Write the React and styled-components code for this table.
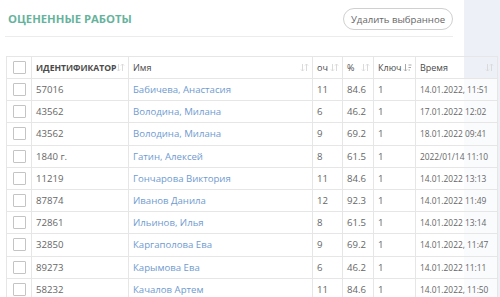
import React from 'react'
import styled, { createGlobalStyle } from 'styled-components'

const Global = createGlobalStyle`
	html, body { margin: 0; padding: 0; background: #fff; }
	body { font-family: "Open Sans", "Liberation Sans", sans-serif; width: 500px; height: 297px; overflow: hidden; }
`

const Page = styled.div`
	width: 500px; height: 297px; overflow: hidden; padding-left: 5px; box-sizing: border-box;
	background: linear-gradient(to right, #fff 464px, #edf1f7 464px);
`
const Head = styled.div`
	display: flex; align-items: center; justify-content: space-between;
	height: 36px; width: 448px; border-bottom: 1px solid #ececec;
`
const Title = styled.h2`
	margin: 0 0 0 3px; font-size: 11.3px; font-weight: 700; color: #66b39c;
`
const Button = styled.button`
	height: 22px; width: 110px; padding: 0; margin-top: 2px; border: 1px solid #d0d0d0; border-radius: 11px;
	background: #fff; color: #666; font-family: inherit; font-size: 9.6px;
`
const Table = styled.table`
	margin-top: 19px; margin-left: 1px; width: 492px; border-collapse: collapse; table-layout: fixed;
	border-top: 1px solid #e6e6e6; border-left: 1px solid #e6e6e6;
`
const Th = styled.th`
	height: 21px; padding: 0 3px 0 4px; text-align: left; font-size: ${ p => p.$bold ? '8.6px' : '9px' };
	font-weight: ${ p => p.$bold ? 700 : 400 }; color: #4a4a4a; border-right: 1px solid #e6e6e6;
	border-bottom: 1px solid #e6e6e6; white-space: nowrap; overflow: hidden;
`
const ThIn = styled.div`
	display: flex; align-items: center; justify-content: space-between;
`
const Tr = styled.tr`
	background: rgba(255,255,255,0.72);
`
const Td = styled.td`
	height: 21.2px; padding: 0 3px 0 4px; font-size: ${ p => p.$small ? '8.4px' : '9.6px' };
	color: ${ p => p.$link ? '#6f9bd0' : '#666' }; border-right: 1px solid #e6e6e6;
	border-bottom: 1px solid #e6e6e6; white-space: nowrap; overflow: hidden;
`
const Box = styled.span`
	display: block; width: 11px; height: 11px; margin-left: 2px; border: 1px solid #c4c4c4; border-radius: 1px;
	background: #fff;
`

const Sort = ({ active }) => (
	<svg width="9" height="9" viewBox="0 0 9 9" style={{ flex: 'none' }}>
		<g stroke={ active ? '#a8a8a8' : '#dadada' } strokeWidth="1" fill="none">
			<path d="M2.5 1v7M1 6.5l1.5 1.5 1.5-1.5" />
			{ active
				? <path d="M5.5 2h3M5.5 4.5h2.5M5.5 7h1.5" />
				: <path d="M6.5 8V1M5 2.5l1.5-1.5 1.5 1.5" /> }
		</g>
	</svg>
)

const rows = [
	['57016', 'Бабичева, Анастасия', 11, '84.6', '14.01.2022, 11:51'],
	['43562', 'Володина, Милана', 6, '46.2', '17.01.2022 12:02'],
	['43562', 'Володина, Милана', 9, '69.2', '18.01.2022 09:41'],
	['1840 г.', 'Гатин, Алексей', 8, '61.5', '2022/01/14 11:10'],
	['11219', 'Гончарова Виктория', 11, '84.6', '14.01.2022 13:13'],
	['87874', 'Иванов Данила', 12, '92.3', '14.01.2022 11:49'],
	['72861', 'Ильинов, Илья', 8, '61.5', '14.01.2022 13:14'],
	['32850', 'Каргаполова Ева', 9, '69.2', '14.01.2022, 11:47'],
	['89273', 'Карымова Ева', 6, '46.2', '14.01.2022 11:11'],
	['58232', 'Качалов Артем', 11, '84.6', '14.01.2022, 11:50'],
]

const App = () => {
	return (
		<Page>
			<Global />
			<Head>
				<Title>ОЦЕНЕННЫЕ РАБОТЫ</Title>
				<Button>Удалить выбранное</Button>
			</Head>
			<Table>
				<colgroup>
					<col style={{ width: 25 }} />
					<col style={{ width: 97 }} />
					<col style={{ width: 184 }} />
					<col style={{ width: 30 }} />
					<col style={{ width: 31 }} />
					<col style={{ width: 42 }} />
					<col />
				</colgroup>
				<thead>
					<tr>
						<Th><Box /></Th>
						<Th $bold><ThIn>ИДЕНТИФИКАТОР<Sort /></ThIn></Th>
						<Th><ThIn>Имя<Sort /></ThIn></Th>
						<Th><ThIn>оч<Sort /></ThIn></Th>
						<Th><ThIn>%<Sort /></ThIn></Th>
						<Th><ThIn>Ключ<Sort active /></ThIn></Th>
						<Th><ThIn>Время<Sort /></ThIn></Th>
					</tr>
				</thead>
				<tbody>
					{ rows.map((r, i) => (
						<Tr key={ i }>
							<Td><Box /></Td>
							<Td>{ r[0] }</Td>
							<Td $link>{ r[1] }</Td>
							<Td>{ r[2] }</Td>
							<Td>{ r[3] }</Td>
							<Td>1</Td>
							<Td $small>{ r[4] }</Td>
						</Tr>
					)) }
				</tbody>
			</Table>
		</Page>
	);
}

export default App;
